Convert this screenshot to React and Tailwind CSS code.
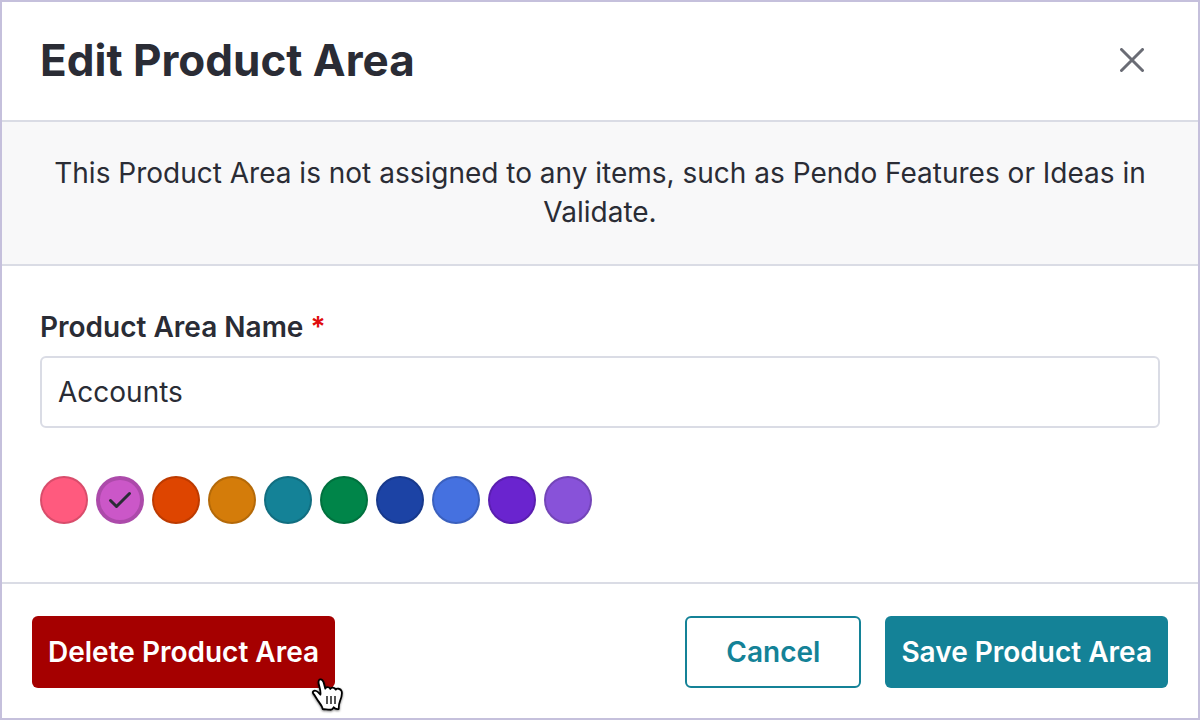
import React, { useState } from "react";
import clsx from "clsx";

const colors = [
  { name: "Pink", fill: "bg-[#ff5a7e]" },
  { name: "Orchid", fill: "bg-[#cb57c8]" },
  { name: "Orange", fill: "bg-[#de4500]" },
  { name: "Amber", fill: "bg-[#d47c0a]" },
  { name: "Teal", fill: "bg-[#148297]" },
  { name: "Green", fill: "bg-[#008549]" },
  { name: "Navy", fill: "bg-[#1c43a5]" },
  { name: "Blue", fill: "bg-[#4571e0]" },
  { name: "Violet", fill: "bg-[#6a24cf]" },
  { name: "Purple", fill: "bg-[#8852d9]" },
];

const buttonBase =
  "h-18 cursor-pointer rounded-md text-[28px] leading-9 font-semibold";

function CloseIcon() {
  return (
    <svg viewBox="0 0 24 24" className="size-6" aria-hidden="true">
      <path
        d="M1.5 1.5 22.5 22.5M22.5 1.5 1.5 22.5"
        fill="none"
        stroke="#6a6c75"
        strokeWidth="3"
        strokeLinecap="round"
      />
    </svg>
  );
}

function CheckIcon() {
  return (
    <svg
      viewBox="0 0 24 24"
      className="pointer-events-none absolute inset-0 m-auto size-6"
      aria-hidden="true"
    >
      <path
        d="M2.5 12.5 8.5 18.5 21.5 5.5"
        fill="none"
        stroke="#2a2c35"
        strokeWidth="3"
        strokeLinecap="round"
        strokeLinejoin="round"
      />
    </svg>
  );
}

function HandPointer() {
  return (
    <svg
      viewBox="63 51 99 111"
      className="pointer-events-none absolute -right-[9px] -bottom-[26px] h-[37px] w-[33px] drop-shadow-[0_1px_1px_rgba(0,0,0,0.5)]"
      aria-hidden="true"
    >
      <path
        d="M98 147C97 139 92 133 86 125C80 117 76 108 70 101C66 95 72 90 79 93C84 95 88 101 91 104C93 98 90 86 87 75C85 67 83 60 90 58C97 57 100 63 102 71L106 86C107 80 118 79 121 87C123 81 134 81 137 89C140 84 152 85 155 94C157 103 153 116 150 123C147 130 146 135 146 147C141 148 135 147 131 142C128 148 124 150 119 149C111 148 104 148 98 147Z"
        fill="#fff"
        stroke="#000"
        strokeWidth="5.5"
        strokeLinejoin="round"
      />
      <path
        d="M111 108V132M123 108V132M135 108V132"
        fill="none"
        stroke="#000"
        strokeWidth="4"
      />
    </svg>
  );
}

function ColorSwatch({ color, selected, onSelect }) {
  return (
    <label className="relative size-12">
      <input
        type="radio"
        name="color"
        value={color.name}
        checked={selected}
        onChange={() => onSelect(color.name)}
        aria-label={color.name}
        className={clsx(
          "block size-12 cursor-pointer appearance-none rounded-full border-black/15",
          selected ? "border-4" : "border-2",
          color.fill
        )}
      />
      {selected && <CheckIcon />}
    </label>
  );
}

function App() {
  const [name, setName] = useState("Accounts");
  const [selectedColor, setSelectedColor] = useState("Orchid");

  return (
    <form
      onSubmit={(e) => e.preventDefault()}
      className="flex min-h-screen flex-col border-2 border-[#c5c0dc] bg-white font-[Inter,sans-serif] text-[28px] leading-[39px] text-[#2a2c35]"
    >
      <header className="flex items-center justify-between border-b-2 border-[#dadce5] pt-8 pr-10 pb-[34px] pl-[38px]">
        <h1 className="text-[44px] leading-[52px] font-bold">
          Edit Product Area
        </h1>
        <button
          type="button"
          aria-label="Close"
          className="flex size-13 cursor-pointer items-center justify-center"
        >
          <CloseIcon />
        </button>
      </header>

      <p className="border-b-2 border-[#dadce5] bg-[#f8f8f9] px-[38px] py-8 text-center">
        This Product Area is not assigned to any items, such as Pendo Features
        or Ideas in Validate.
      </p>

      <div className="flex flex-1 flex-col px-[38px] pt-10">
        <label htmlFor="area-name" className="mb-2 leading-[42px] font-semibold">
          Product Area Name <span className="text-[#e00d0d]">*</span>
        </label>
        <input
          id="area-name"
          type="text"
          required
          value={name}
          onChange={(e) => setName(e.target.value)}
          className="h-18 w-full rounded-md border-2 border-[#dadce5] px-4 outline-none"
        />
        <div role="radiogroup" aria-label="Color" className="mt-12 mb-14 flex gap-2">
          {colors.map((color) => (
            <ColorSwatch
              key={color.name}
              color={color}
              selected={color.name === selectedColor}
              onSelect={setSelectedColor}
            />
          ))}
        </div>
      </div>

      <footer className="flex items-center justify-between border-t-2 border-[#dadce5] px-[30px] pt-8 pb-[30px]">
        <div className="relative">
          <button
            type="button"
            className={clsx(buttonBase, "bg-[#a50000] px-4 text-white")}
          >
            Delete Product Area
          </button>
          <HandPointer />
        </div>
        <div className="flex gap-6">
          <button
            type="button"
            className={clsx(
              buttonBase,
              "min-w-44 border-2 border-[#148297] bg-white px-4 text-[#148297]"
            )}
          >
            Cancel
          </button>
          <button
            type="submit"
            className={clsx(buttonBase, "bg-[#148297] px-4 text-white")}
          >
            Save Product Area
          </button>
        </div>
      </footer>
    </form>
  );
}

export default App;
